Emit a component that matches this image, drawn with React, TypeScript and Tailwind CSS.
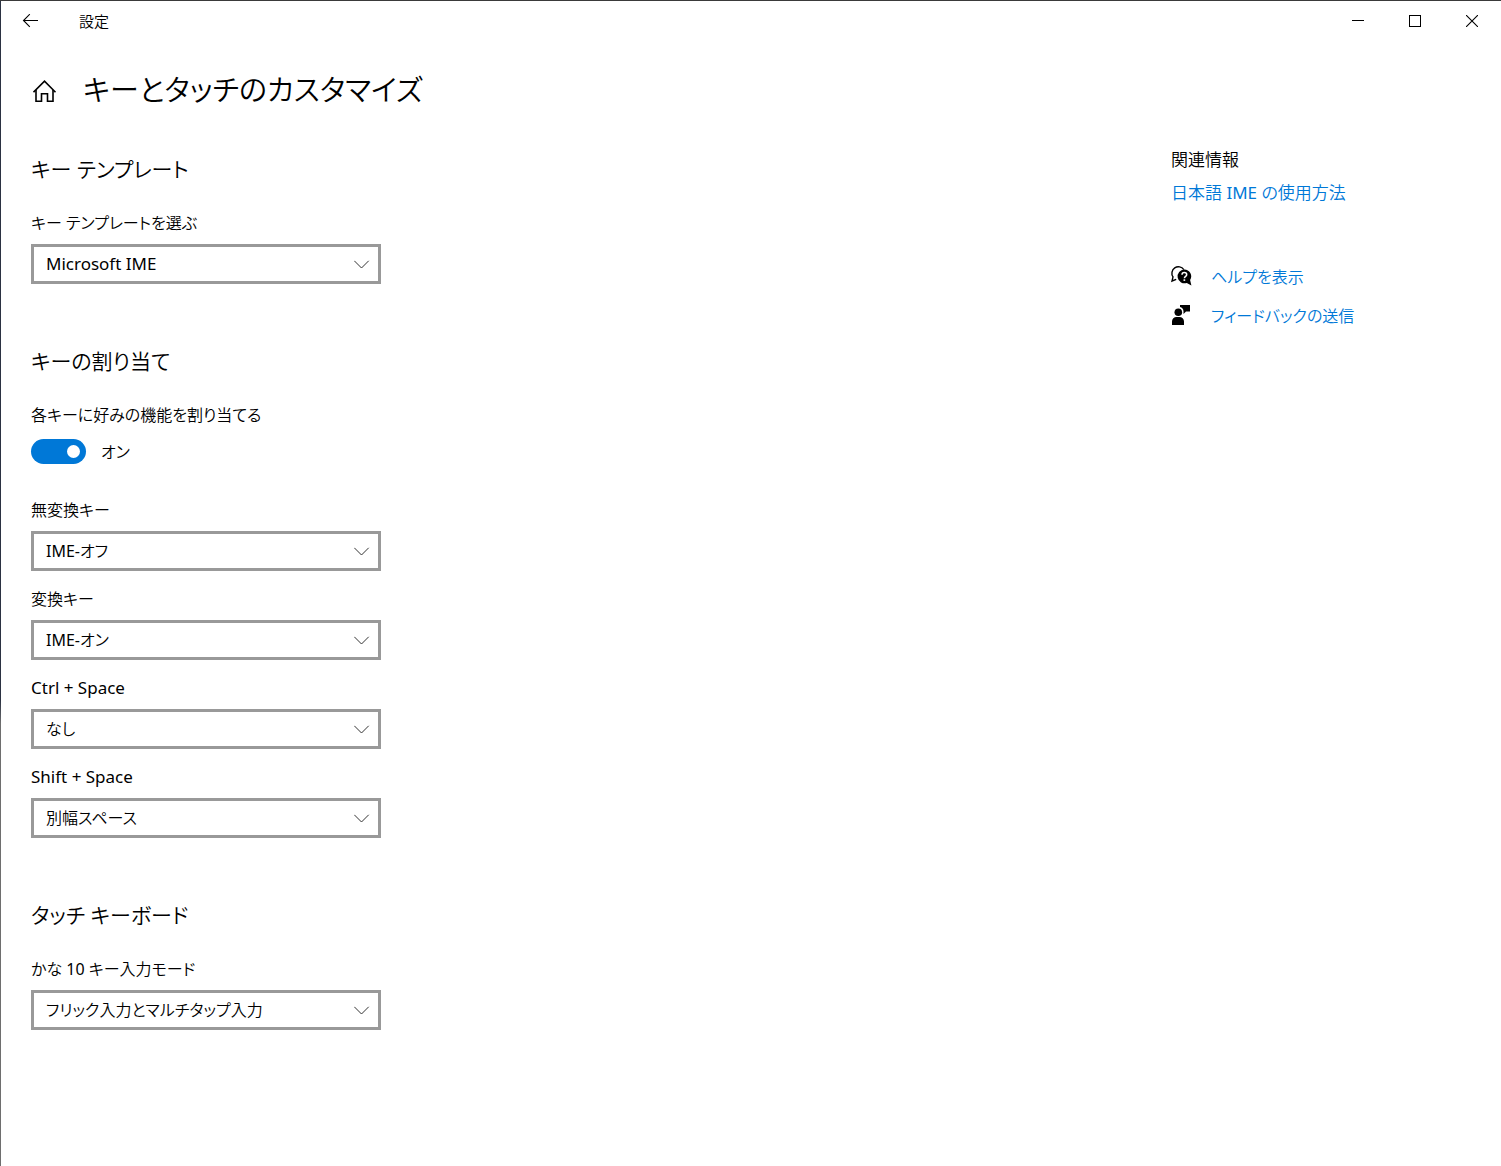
import { useState } from 'react';
import type { ReactNode } from 'react';

type SelectFieldProps = {
  id: string;
  label: string;
  options: string[];
  latinLabel?: boolean;
  latinValue?: boolean;
};

function SelectField({ id, label, options, latinLabel, latinValue }: SelectFieldProps) {
  const [value, setValue] = useState(options[0]);

  return (
    <div className="flex flex-col gap-[9px]">
      <label htmlFor={id} className={latinLabel ? 'text-[17px] leading-6' : 'leading-6'}>
        {label}
      </label>
      <div className="relative w-full max-w-[350px]">
        <select
          id={id}
          value={value}
          onChange={(e) => setValue(e.target.value)}
          className={`block h-10 w-full appearance-none border-3 border-[#999999] bg-white pl-3 pr-10 hover:border-[#666666] focus:outline-none ${
            latinValue ? 'text-[17px]' : ''
          }`}
        >
          {options.map((option) => (
            <option key={option} value={option}>
              {option}
            </option>
          ))}
        </select>
        <svg
          viewBox="0 0 16 9"
          className="pointer-events-none absolute right-[11px] top-4 h-[9px] w-4"
          fill="none"
          stroke="#333333"
          strokeWidth="1"
        >
          <path d="M.3.8 7.5 8 14.7.8" />
        </svg>
      </div>
    </div>
  );
}

function Section({ title, children }: { title: string; children: ReactNode }) {
  return (
    <section>
      <h2 className="mb-[26px] text-[21px] leading-8">{title}</h2>
      {children}
    </section>
  );
}

function TitleBar() {
  return (
    <header className="flex h-10 items-center pr-px">
      <button type="button" aria-label="戻る" className="flex h-10 w-[58px] items-center justify-center hover:bg-gray-200">
        <svg viewBox="0 0 16 14" className="h-3.5 w-4" fill="none" stroke="black" strokeWidth="1.1">
          <path d="M7.8.2 1.5 6.5l6.3 6.3M1.5 6.5H16" />
        </svg>
      </button>
      <span className="ml-5 flex-1 text-[15px]">設定</span>
      <button type="button" aria-label="最小化" className="flex h-10 w-[57px] items-center justify-center hover:bg-gray-200">
        <svg viewBox="0 0 12 12" className="size-3" stroke="black" shapeRendering="crispEdges">
          <path d="M0 5.5h12" />
        </svg>
      </button>
      <button type="button" aria-label="最大化" className="flex h-10 w-[57px] items-center justify-center hover:bg-gray-200">
        <svg viewBox="0 0 12 12" className="size-3" fill="none" stroke="black" shapeRendering="crispEdges">
          <path d="M.5.5h11v11H.5z" />
        </svg>
      </button>
      <button type="button" aria-label="閉じる" className="flex h-10 w-[57px] items-center justify-center hover:bg-red-600">
        <svg viewBox="0 0 12 12" className="size-3" stroke="black" strokeWidth="1.1">
          <path d="M0 0l12 12M12 0 0 12" />
        </svg>
      </button>
    </header>
  );
}

function HelpIcon() {
  return (
    <svg viewBox="0 0 21 21" className="size-[21px] overflow-visible">
      <path
        d="M5.2 12.4 1 14l1-4.1A6.3 6.3 0 1 1 12.8 2.6"
        fill="none"
        stroke="black"
        strokeWidth="1.4"
      />
      <path
        d="M13.3 2.5a6.9 6.9 0 0 1 5.8 10.6l1.3 5.3-4.6-2.5A6.9 6.9 0 1 1 13.3 2.5z"
        fill="black"
      />
      <path
        d="M11 7.8c0-1.4 1-2.200 2.300-2.200s2.400.8 2.400 2.100c0 1.700-2.300 1.800-2.300 3.500"
        fill="none"
        stroke="white"
        strokeWidth="1.5"
      />
      <path d="M12.500 12.300h1.700v1.600h-1.700z" fill="white" />
    </svg>
  );
}

function FeedbackIcon() {
  return (
    <svg viewBox="0 1 21 21" className="size-[21px] overflow-visible">
      <path d="M9 0h10v6.500h-4l-2.500 2.500V6.500C12.500 4 11 2.500 9 2z" fill="black" />
      <circle cx="7.300" cy="7.300" r="3.800" fill="black" />
      <path d="M1 20v-3.500a4.500 4.500 0 0 1 4.500-4.500h3a4.500 4.500 0 0 1 4.500 4.500V20z" fill="black" />
    </svg>
  );
}

export default function App() {
  const [assignKeys, setAssignKeys] = useState(true);

  return (
    <div className="flex min-h-screen border-t border-[#3a3a3a] bg-white font-['Noto_Sans','Noto_Sans_CJK_JP_DemiLight','Noto_Sans_CJK_JP',sans-serif] text-[16px] text-black [font-feature-settings:'palt']">
      <div className="w-px bg-linear-to-b from-[#2b3242] from-60% to-[#6e6e6e] to-62%" />
      <div className="flex-1">
        <TitleBar />

        <div className="flex items-center gap-[26px] pl-8 pt-[25px]">
          <a href="#home" aria-label="ホーム">
            <svg viewBox="0 0 24 24" className="size-6" fill="none" stroke="black" strokeWidth="1.6">
              <path d="M.5 14.2 11.5 3.200l11 11" />
              <path d="M3 12v11.200h5.500v-7.500h6v7.500H20V12" />
            </svg>
          </a>
          <h1 className="text-[29px] font-[350] leading-[48px]">キーとタッチのカスタマイズ</h1>
        </div>

        <div className="flex pl-[30px]">
          <main className="flex flex-1 flex-col gap-[61px] pb-16 pt-[39px]">
            <Section title="キー テンプレート">
              <SelectField id="template" label="キー テンプレートを選ぶ" options={['Microsoft IME', 'ATOK']} latinValue />
            </Section>

            <Section title="キーの割り当て">
              <label htmlFor="assign" className="block leading-6">
                各キーに好みの機能を割り当てる
              </label>
              <div className="mb-[34px] mt-3 flex h-[25px] items-center gap-[15px]">
                <input
                  id="assign"
                  type="checkbox"
                  role="switch"
                  checked={assignKeys}
                  onChange={(e) => setAssignKeys(e.target.checked)}
                  className="flex h-[25px] w-[55px] appearance-none items-center rounded-full bg-gray-400 px-1.5 before:size-[13px] before:rounded-full before:bg-white checked:justify-end checked:bg-[#0078d7]"
                />
                <span>{assignKeys ? 'オン' : 'オフ'}</span>
              </div>
              <div className="flex flex-col gap-4">
                <SelectField id="muhenkan" label="無変換キー" options={['IME-オフ', 'IME-オン', 'なし']} />
                <SelectField id="henkan" label="変換キー" options={['IME-オン', 'IME-オフ', 'なし']} />
                <SelectField id="ctrl-space" label="Ctrl + Space" options={['なし', 'IME-オン/オフ']} latinLabel />
                <SelectField id="shift-space" label="Shift + Space" options={['別幅スペース', 'なし']} latinLabel />
              </div>
            </Section>

            <Section title="タッチ キーボード">
              <SelectField
                id="kana"
                label="かな 10 キー入力モード"
                options={['フリック入力とマルチタップ入力', 'フリック入力']}
              />
            </Section>
          </main>

          <aside className="w-[330px] pt-[34px] leading-6">
            <h3 className="mb-[9px] text-[17px]">関連情報</h3>
            <a href="#ime" className="block text-[17px] text-[#0078d7]">
              日本語 IME の使用方法
            </a>
            <div className="mt-[60px] flex flex-col gap-[15px] text-[#0078d7]">
              <a href="#help" className="flex items-center gap-[19px]">
                <HelpIcon />
                ヘルプを表示
              </a>
              <a href="#feedback" className="flex items-center gap-[19px]">
                <FeedbackIcon />
                フィードバックの送信
              </a>
            </div>
          </aside>
        </div>
      </div>
    </div>
  );
}
